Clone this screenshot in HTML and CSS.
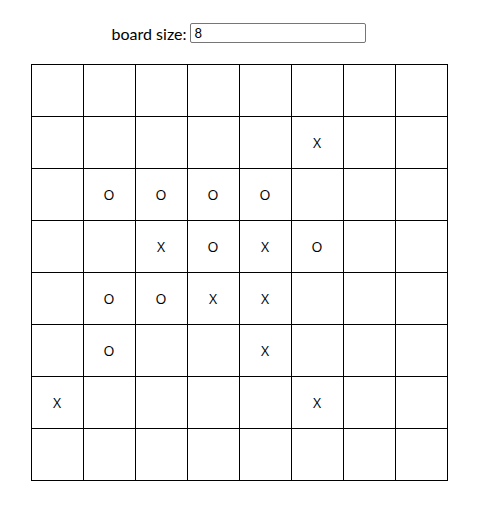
FILE: index.html
```html
<!DOCTYPE html>
<html>
<head>
<meta charset="utf-8">
<link rel="stylesheet" href="styles.css">
</head>
<body>
<div class="app">
  <div class="controls">
    <label class="label" for="size">board size:</label>
    <input class="size-input" id="size" type="text" value="8">
  </div>
  <div class="board">
    <div class="cell"></div><div class="cell"></div><div class="cell"></div><div class="cell"></div><div class="cell"></div><div class="cell"></div><div class="cell"></div><div class="cell"></div>
    <div class="cell"></div><div class="cell"></div><div class="cell"></div><div class="cell"></div><div class="cell"></div><div class="cell">X</div><div class="cell"></div><div class="cell"></div>
    <div class="cell"></div><div class="cell">O</div><div class="cell">O</div><div class="cell">O</div><div class="cell">O</div><div class="cell"></div><div class="cell"></div><div class="cell"></div>
    <div class="cell"></div><div class="cell"></div><div class="cell">X</div><div class="cell">O</div><div class="cell">X</div><div class="cell">O</div><div class="cell"></div><div class="cell"></div>
    <div class="cell"></div><div class="cell">O</div><div class="cell">O</div><div class="cell">X</div><div class="cell">X</div><div class="cell"></div><div class="cell"></div><div class="cell"></div>
    <div class="cell"></div><div class="cell">O</div><div class="cell"></div><div class="cell"></div><div class="cell">X</div><div class="cell"></div><div class="cell"></div><div class="cell"></div>
    <div class="cell">X</div><div class="cell"></div><div class="cell"></div><div class="cell"></div><div class="cell"></div><div class="cell">X</div><div class="cell"></div><div class="cell"></div>
    <div class="cell"></div><div class="cell"></div><div class="cell"></div><div class="cell"></div><div class="cell"></div><div class="cell"></div><div class="cell"></div><div class="cell"></div>
  </div>
</div>
</body>
</html>
```
FILE: styles.css
```css
html, body {
  margin: 0;
  padding: 0;
  background: #fff;
}
.app {
  display: flex;
  flex-direction: column;
  align-items: center;
  padding: 23px 5px 0 0;
  font-family: Lato, "Liberation Sans", sans-serif;
  color: #000;
}
.controls {
  display: flex;
  align-items: center;
  gap: 4px;
  height: 20px;
}
.label {
  font-size: 16px;
}
.size-input {
  box-sizing: border-box;
  width: 176px;
  height: 20px;
  margin: 0;
  padding: 0 3px;
  border: 1px solid #767676;
  border-radius: 2px;
  font-family: Lato, "Liberation Sans", sans-serif;
  font-size: 13px;
  color: #000;
}
.board {
  margin-top: 21px;
  display: grid;
  grid-template-columns: repeat(8, 52px);
  grid-auto-rows: 52px;
  border-top: 1px solid #000;
  border-left: 1px solid #000;
}
.cell {
  border-right: 1px solid #000;
  border-bottom: 1px solid #000;
  display: flex;
  align-items: center;
  justify-content: center;
  font-family: "Open Sans", Lato, sans-serif;
  font-size: 14px;
}
```
